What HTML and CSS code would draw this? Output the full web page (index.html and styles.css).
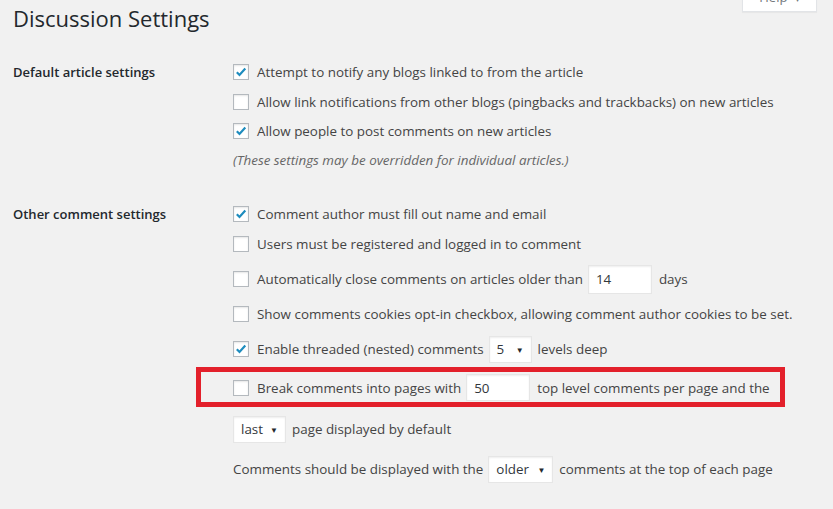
FILE: index.html
```html
<!DOCTYPE html>
<html lang="en">
<head>
    <meta charset="UTF-8">
    <meta name="viewport" content="width=device-width, initial-scale=1.0">
    <title>Discussion Settings</title>
    <link rel="stylesheet" href="styles.css">
</head>
<body>

    <main class="wrap">

        <div class="top">
            <h1>Discussion Settings</h1>
            <button class="help" type="button">Help <span class="arrow">&#9662;</span></button>
        </div>

        <section class="group first">
            <div class="th">Default article settings</div>
            <div class="td">
                <label class="opt"><span class="cb on"><svg viewBox="0 0 16 16" width="16" height="16"><path d="M3.8 8.3l2.7 2.7 5.8-6.4" fill="none" stroke="#1e8cbe" stroke-width="2.2"/></svg></span>Attempt to notify any blogs linked to from the article</label>
                <label class="opt"><span class="cb"></span>Allow link notifications from other blogs (pingbacks and trackbacks) on new articles</label>
                <label class="opt"><span class="cb on"><svg viewBox="0 0 16 16" width="16" height="16"><path d="M3.8 8.3l2.7 2.7 5.8-6.4" fill="none" stroke="#1e8cbe" stroke-width="2.2"/></svg></span>Allow people to post comments on new articles</label>
                <p class="note">(These settings may be overridden for individual articles.)</p>
            </div>
        </section>

        <section class="group">
            <div class="th">Other comment settings</div>
            <div class="td">
                <label class="opt"><span class="cb on"><svg viewBox="0 0 16 16" width="16" height="16"><path d="M3.8 8.3l2.7 2.7 5.8-6.4" fill="none" stroke="#1e8cbe" stroke-width="2.2"/></svg></span>Comment author must fill out name and email</label>
                <label class="opt"><span class="cb"></span>Users must be registered and logged in to comment</label>
                <label class="opt field push"><span class="cb"></span>Automatically close comments on articles older than<span class="num w64">14</span>days</label>
                <label class="opt field"><span class="cb"></span>Show comments cookies opt-in checkbox, allowing comment author cookies to be set.</label>
                <label class="opt field"><span class="cb on"><svg viewBox="0 0 16 16" width="16" height="16"><path d="M3.8 8.3l2.7 2.7 5.8-6.4" fill="none" stroke="#1e8cbe" stroke-width="2.2"/></svg></span>Enable threaded (nested) comments<span class="sel w43">5<i>&#9660;</i></span>levels deep</label>
                <label class="opt marked"><span class="cb"></span>Break comments into pages with<span class="num w64 short">50</span>top level comments per page and the</label>
                <div class="opt field after"><span class="sel w53 lead">last<i>&#9660;</i></span>page displayed by default</div>
                <div class="opt field gap">Comments should be displayed with the<span class="sel w65">older<i>&#9660;</i></span>comments at the top of each page</div>
            </div>
        </section>

    </main>

</body>
</html>
```

FILE: styles.css
```css
body{
    margin: 0;
    background-color: #f1f1f1;
    color: #444;
    font-family: "Open Sans", "Noto Sans", sans-serif;
    font-size: 13.4px;
    overflow: hidden;
}

.wrap{
    padding: 0 0 0 13px;
}

.top{
    display: flex;
    justify-content: space-between;
    align-items: flex-start;
    height: 42px;
}

.top h1{
    margin: 4px 0 0;
    font-size: 22px;
    font-weight: 400;
    line-height: 29px;
    color: #23282d;
}

.help{
    margin: -17px 16px 0 0;
    width: 75px;
    height: 29px;
    background-color: #fff;
    border: 1px solid #e2e4e7;
    border-top: none;
    box-shadow: 0 1px 1px rgba(0,0,0,.04);
    color: #72777c;
    font-family: inherit;
    font-size: 13px;
    padding: 0;
}

.help .arrow{
    font-size: 10px;
    margin-left: 4px;
}

.group{
    display: grid;
    grid-template-columns: 220px 1fr;
}

.group.first{
    margin-top: 15.5px;
    height: 142px;
}

.th{
    font-size: 13px;
    font-weight: 600;
    color: #23282d;
    line-height: 29.5px;
}

.opt{
    display: flex;
    align-items: center;
    height: 29.5px;
    white-space: pre;
}

.opt.field{
    height: 35px;
}

.opt.push{
    margin-top: 3px;
}

.opt.after{
    margin-top: 4.5px;
}

.opt.gap{
    margin-top: 5px;
}

.cb{
    display: inline-flex;
    width: 16px;
    height: 16px;
    box-sizing: border-box;
    margin-right: 8px;
    background-color: #fff;
    border: 1px solid #b4b9be;
    box-shadow: inset 0 1px 2px rgba(0,0,0,.1);
    position: relative;
}

.cb svg{
    position: absolute;
    left: -1px;
    top: -1px;
}

.num, .sel{
    display: inline-flex;
    align-items: center;
    box-sizing: border-box;
    height: 29px;
    background-color: #fff;
    border: 1px solid #e6e6e6;
    box-shadow: inset 0 1px 2px rgba(0,0,0,.07);
    color: #32373c;
    padding-left: 7px;
    margin: 0 7px 0 5px;
}

.num.short{
    height: 27px;
}

.sel{
    height: 27px;
    justify-content: space-between;
    padding-right: 7px;
    margin-right: 6px;
}

.sel i{
    font-style: normal;
    font-size: 8px;
    color: #23282d;
}

.sel.lead{
    margin-left: 0;
}

.w43{ width: 43px; }
.w53{ width: 53px; }
.w64{ width: 64px; }
.w65{ width: 65px; }

.opt.marked{
    height: 40px;
    box-sizing: border-box;
    margin: 0.5px 0 0 -37px;
    width: 589px;
    padding: 1px 0 0 32px;
    border: 5px solid #e3202b;
}

.note{
    margin: 0;
    line-height: 29.5px;
    font-style: italic;
    color: #666;
}
```
